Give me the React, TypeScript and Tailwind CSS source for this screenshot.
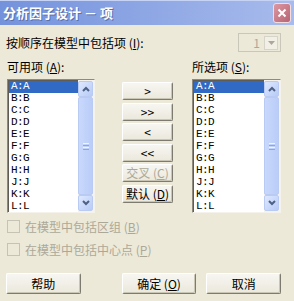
import React from "react";

const items = ["A:A", "B:B", "C:C", "D:D", "E:E", "F:F", "G:G", "H:H", "J:J", "K:K", "L:L"];

function Btn({ children, className = "", disabled = false }: { children: React.ReactNode; className?: string; disabled?: boolean }) {
  return (
    <div
      className={`flex items-center justify-center rounded-[2px] border border-t-white border-l-white border-r-[#7d7b70] border-b-[#7d7b70] bg-gradient-to-b from-[#f7f6f1] to-[#ebe8dc] shadow-[inset_-1px_-1px_0_#c9c6b6] text-[12px] leading-none ${disabled ? "text-[#aca899]" : "text-black"} ${className}`}
    >
      {children}
    </div>
  );
}

function Arrow({ up }: { up: boolean }) {
  return (
    <div className="flex h-[16px] w-full items-center justify-center rounded-[2px] border border-[#b9cbf3] bg-gradient-to-br from-[#dfe9ff] to-[#b7cbf7]">
      <svg width="8" height="6" viewBox="0 0 8 6">
        <path d={up ? "M1 5 L4 2 L7 5" : "M1 1 L4 4 L7 1"} stroke="#4d6185" strokeWidth="2" fill="none" />
      </svg>
    </div>
  );
}

function ListBox({ w }: { w: string }) {
  return (
    <div className={`flex h-[134px] ${w} border border-t-[#8e8b7e] border-l-[#8e8b7e] border-r-[#f4f2ea] border-b-[#f4f2ea] bg-white shadow-[inset_1px_1px_0_#5e5c55]`}>
      <div className="flex flex-1 flex-col pl-px pt-px">
        {items.map((it, i) => (
          <div
            key={it}
            className={`flex h-[12px] items-center pl-[2px] font-['Liberation_Mono',monospace] text-[11px] tracking-[-0.6px] leading-none ${i === 0 ? "bg-[#316ac5] text-white" : "text-black"}`}
          >
            {it}
          </div>
        ))}
      </div>
      <div className="flex w-[16px] flex-col bg-[#f4f3ee] py-px pr-px">
        <Arrow up />
        <div className="flex flex-1 items-center justify-center rounded-[2px] border border-[#b9cbf3] bg-gradient-to-r from-[#c9d8fc] to-[#bacdf8]">
          <div className="flex flex-col gap-px">
            <div className="h-px w-[6px] bg-[#eef3fe]" />
            <div className="h-px w-[6px] bg-[#8fa6d8]" />
            <div className="h-px w-[6px] bg-[#eef3fe]" />
            <div className="h-px w-[6px] bg-[#8fa6d8]" />
          </div>
        </div>
        <Arrow up={false} />
      </div>
    </div>
  );
}

function Check({ label, acc }: { label: string; acc: string }) {
  return (
    <div className="flex h-[13px] items-center gap-[5px]">
      <div className="h-[13px] w-[13px] border border-[#c6c3b4] bg-[#ece9d8]" />
      <span className="text-[12px] leading-none text-[#aca899]">
        {label}(<span className="underline">{acc}</span>)
      </span>
    </div>
  );
}

export default function App() {
  return (
    <div className="h-[301px] w-[294px] overflow-hidden bg-[#ece9d8] font-['Noto_Sans_CJK_SC',sans-serif] select-none">
      {/* Title bar */}
      <div className="flex h-[25px] items-center justify-between bg-gradient-to-r from-[#7492dc] to-[#a8bbec] pl-[3px] pr-[3px] shadow-[inset_0_1px_0_#c6d3f4]">
        <span className="text-[13px] font-bold text-white [text-shadow:1px_1px_0_#5a6fa8]">分析因子设计 － 项</span>
        <div className="flex h-[20px] w-[18px] items-center justify-center rounded-[3px] border border-[#f0dde0] bg-gradient-to-br from-[#dd98a2] to-[#b66474]">
          <svg width="10" height="10" viewBox="0 0 10 10">
            <path d="M1.5 1.5 L8.5 8.5 M8.5 1.5 L1.5 8.5" stroke="white" strokeWidth="2" />
          </svg>
        </div>
      </div>

      <div className="flex flex-col pl-[6px] pr-[13px]">
        {/* Order row */}
        <div className="mt-[8px] flex h-[19px] items-center justify-between">
          <span className="text-[12px] leading-none text-black">
            按顺序在模型中包括项 (<span className="underline">I</span>):
          </span>
          <div className="flex h-[19px] w-[43px] items-center border border-[#c9c7ba] bg-[#ece9d8] pr-[2px]">
            <span className="flex-1 pr-[4px] text-right text-[12px] leading-none text-[#aca899]">1</span>
            <div className="flex h-[14px] w-[14px] items-center justify-center border border-[#d6d4c8] bg-[#f1efe6]">
              <svg width="7" height="4" viewBox="0 0 7 4">
                <path d="M0 0 L7 0 L3.5 4 Z" fill="#aca899" />
              </svg>
            </div>
          </div>
        </div>

        {/* Labels */}
        <div className="mt-[8px] flex h-[14px] items-center pl-px">
          <span className="w-[185px] text-[12px] leading-none text-black">
            可用项 (<span className="underline">A</span>):
          </span>
          <span className="text-[12px] leading-none text-black">
            所选项 (<span className="underline">S</span>):
          </span>
        </div>

        {/* Lists + buttons */}
        <div className="mt-[5px] flex pl-px">
          <ListBox w="w-[88px]" />
          <div className="ml-[27px] mt-[3px] flex w-[51px] flex-col gap-[2.6px]">
            <Btn className="h-[18px]">&gt;</Btn>
            <Btn className="h-[18px]">&gt;&gt;</Btn>
            <Btn className="h-[18px]">&lt;</Btn>
            <Btn className="h-[18px]">&lt;&lt;</Btn>
            <Btn className="h-[18px]" disabled>
              交叉 (<span className="underline">C</span>)
            </Btn>
            <Btn className="h-[18px]">
              默认 (<span className="underline">D</span>)
            </Btn>
          </div>
          <div className="ml-[19px]">
            <ListBox w="w-[89px]" />
          </div>
        </div>

        {/* Checkboxes */}
        <div className="mt-[7px] flex flex-col gap-[10px] pl-px">
          <Check label="在模型中包括区组 " acc="B" />
          <Check label="在模型中包括中心点 " acc="P" />
        </div>

        {/* Bottom buttons */}
        <div className="mt-[17px] flex">
          <Btn className="h-[21px] w-[75px]">帮助</Btn>
          <Btn className="ml-[41px] h-[21px] w-[75px]">
            确定 (<span className="underline">O</span>)
          </Btn>
          <Btn className="ml-[10px] h-[21px] w-[75px]">取消</Btn>
        </div>
      </div>
    </div>
  );
}
